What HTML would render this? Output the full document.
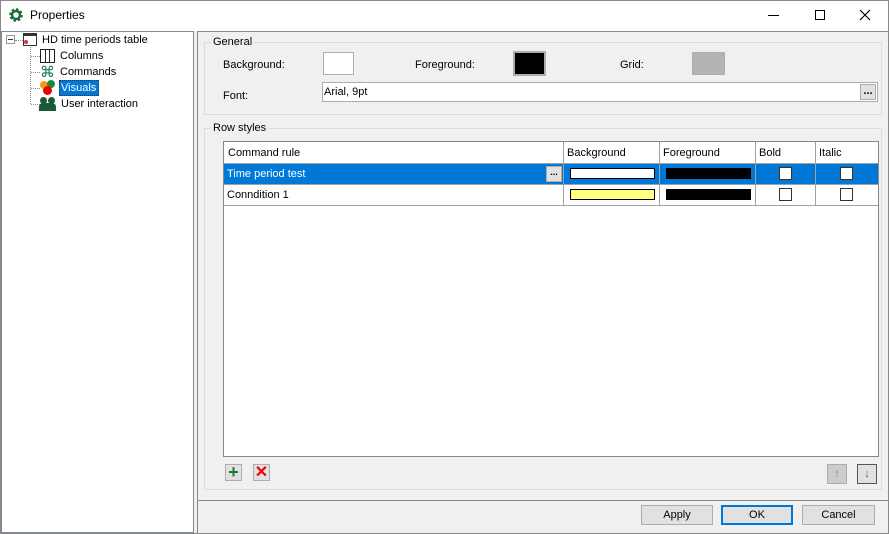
<!DOCTYPE html><html><head><style>
*{box-sizing:border-box}body{margin:0;width:889px;height:534px;position:relative;overflow:hidden;font-family:"Liberation Sans",Arial,sans-serif;font-size:11px;color:#000;background:#f0f0f0}
.a{position:absolute}
.t{position:absolute;white-space:nowrap}
.cb{position:absolute;width:13px;height:13px;border:1px solid #333;background:#fff}
.btn{position:absolute;height:20px;border:1px solid #adadad;background:#e1e1e1;text-align:center;line-height:18px}
</style></head><body>
<div class="a" style="left:0;top:0;width:889px;height:534px;border:1px solid #888"></div>
<div class="a" style="left:1px;top:1px;width:887px;height:30px;background:#fff"></div>
<svg class="a" style="left:9px;top:8px" width="14" height="14" viewBox="0 0 14 14"><circle cx="7" cy="7" r="5" fill="none" stroke="#1a6e3a" stroke-width="3.5" stroke-dasharray="2.2 1.7"/><circle cx="7" cy="7" r="4" fill="none" stroke="#1a6e3a" stroke-width="2.5"/></svg>
<div class="t" style="left:30px;top:8px;font-size:12px">Properties</div>
<div class="a" style="left:768px;top:15px;width:11px;height:1px;background:#000"></div>
<div class="a" style="left:815px;top:10px;width:10px;height:10px;border:1px solid #000"></div>
<svg class="a" style="left:859px;top:9px" width="12" height="12"><path d="M1 1L11 11M11 1L1 11" stroke="#000" stroke-width="1.2"/></svg>
<!-- tree -->
<div class="a" style="left:1px;top:31px;width:193px;height:502px;background:#fff;border:1px solid #828790"></div>
<div class="a" style="left:6px;top:35px;width:9px;height:9px;border:1px solid #999;background:#fff"></div>
<div class="a" style="left:8px;top:39px;width:5px;height:1px;background:#333"></div>
<div class="a" style="left:15px;top:40px;width:8px;border-top:1px dotted #888"></div>
<div class="a" style="left:30px;top:47px;height:57px;border-left:1px dotted #888"></div>
<div class="a" style="left:31px;top:56px;width:9px;border-top:1px dotted #888"></div>
<div class="a" style="left:31px;top:72px;width:9px;border-top:1px dotted #888"></div>
<div class="a" style="left:31px;top:88px;width:9px;border-top:1px dotted #888"></div>
<div class="a" style="left:31px;top:104px;width:9px;border-top:1px dotted #888"></div>
<div class="a" style="left:23px;top:33px;width:14px;height:13px;border:1px solid #333;background:#fff;border-top-width:3px"></div>
<div class="a" style="left:24px;top:40px;width:4px;height:4px;border-radius:50%;background:#d33"></div>
<div class="t" style="left:42px;top:34px">HD time periods table</div>
<div class="a" style="left:40px;top:49px;width:15px;height:14px;border:1px solid #222"></div>
<div class="a" style="left:45px;top:49px;width:5px;height:14px;border-left:1px solid #222;border-right:1px solid #222"></div>
<div class="t" style="left:60px;top:50px">Columns</div>
<div class="t" style="left:40px;top:63px;font-size:15px;color:#1a7a4a">&#8984;</div>
<div class="t" style="left:60px;top:66px">Commands</div>
<div class="a" style="left:40px;top:81px;width:8px;height:8px;border-radius:50%;background:#f39c12"></div>
<div class="a" style="left:47px;top:80px;width:8px;height:8px;border-radius:50%;background:#1a8a3a"></div>
<div class="a" style="left:43px;top:86px;width:9px;height:9px;border-radius:50%;background:#e00"></div>
<div class="a" style="left:59px;top:80px;width:40px;height:16px;background:#0078d7;border:1px dotted #333"></div>
<div class="t" style="left:61px;top:82px;color:#fff">Visuals</div>
<div class="a" style="left:40px;top:97px;width:7px;height:7px;border-radius:50%;background:#1a5a3a"></div>
<div class="a" style="left:48px;top:97px;width:7px;height:7px;border-radius:50%;background:#1a5a3a"></div>
<div class="a" style="left:39px;top:103px;width:17px;height:8px;border-radius:4px 4px 0 0;background:#1a5a3a"></div>
<div class="t" style="left:61px;top:98px">User interaction</div>
<!-- right -->
<div class="a" style="left:197px;top:31px;width:691px;height:502px;border:1px solid #828790;border-right:none;border-bottom:none"></div>
<div class="a" style="left:204px;top:42px;width:678px;height:73px;border:1px solid #dcdcdc"></div>
<div class="t" style="left:211px;top:36px;background:#f0f0f0;padding:0 2px">General</div>
<div class="t" style="left:223px;top:59px">Background:</div>
<div class="a" style="left:323px;top:52px;width:31px;height:23px;border:1px solid #adadad;background:#fff"></div>
<div class="t" style="left:415px;top:59px">Foreground:</div>
<div class="a" style="left:514px;top:52px;width:31px;height:23px;border:1px solid #adadad;background:#000;outline:1px solid #adadad"></div>
<div class="t" style="left:620px;top:59px">Grid:</div>
<div class="a" style="left:692px;top:52px;width:33px;height:23px;border:1px solid #adadad;background:#b4b4b4"></div>
<div class="t" style="left:223px;top:90px">Font:</div>
<div class="a" style="left:322px;top:82px;width:556px;height:20px;border:1px solid #adadad;background:#fff"></div>
<div class="t" style="left:324px;top:86px">Arial, 9pt</div>
<div class="a" style="left:860px;top:84px;width:16px;height:16px;border:1px solid #adadad;background:#e1e1e1;font-weight:bold;text-align:center;line-height:12px">...</div>
<div class="a" style="left:204px;top:128px;width:678px;height:362px;border:1px solid #dcdcdc"></div>
<div class="t" style="left:211px;top:122px;background:#f0f0f0;padding:0 2px">Row styles</div>
<div class="a" style="left:223px;top:141px;width:656px;height:316px;border:1px solid #828790;background:#fff"></div>
<div class="a" style="left:224px;top:163px;width:654px;height:1px;background:#a0a0a0"></div>
<div class="a" style="left:224px;top:164px;width:654px;height:20px;background:#0078d7"></div>
<div class="a" style="left:224px;top:184px;width:654px;height:1px;background:#a0a0a0"></div>
<div class="a" style="left:224px;top:205px;width:654px;height:1px;background:#a0a0a0"></div>
<div class="a" style="left:563px;top:142px;width:1px;height:63px;background:#a0a0a0"></div>
<div class="a" style="left:659px;top:142px;width:1px;height:63px;background:#a0a0a0"></div>
<div class="a" style="left:755px;top:142px;width:1px;height:63px;background:#a0a0a0"></div>
<div class="a" style="left:815px;top:142px;width:1px;height:63px;background:#a0a0a0"></div>
<div class="t" style="left:228px;top:147px">Command rule</div>
<div class="t" style="left:567px;top:147px">Background</div>
<div class="t" style="left:663px;top:147px">Foreground</div>
<div class="t" style="left:759px;top:147px">Bold</div>
<div class="t" style="left:819px;top:147px">Italic</div>
<div class="t" style="left:227px;top:168px;color:#fff">Time period test</div>
<div class="a" style="left:546px;top:166px;width:16px;height:16px;border:1px solid #adadad;background:#e1e1e1;font-size:9px;font-weight:bold;text-align:center;line-height:10px">...</div>
<div class="a" style="left:570px;top:168px;width:85px;height:11px;border:1px solid #000;background:#fff"></div>
<div class="a" style="left:666px;top:168px;width:85px;height:11px;background:#000"></div>
<div class="cb" style="left:779px;top:167px"></div><div class="cb" style="left:840px;top:167px"></div>
<div class="t" style="left:227px;top:189px">Conndition 1</div>
<div class="a" style="left:570px;top:189px;width:85px;height:11px;border:1px solid #000;background:#ffff80"></div>
<div class="a" style="left:666px;top:189px;width:85px;height:11px;background:#000"></div>
<div class="cb" style="left:779px;top:188px"></div><div class="cb" style="left:840px;top:188px"></div>
<div class="a" style="left:225px;top:464px;width:17px;height:17px;border:1px solid #adadad;background:#e1e1e1;color:#1a7a3a;font-size:18px;font-weight:bold;text-align:center;line-height:14px">+</div>
<div class="a" style="left:253px;top:464px;width:17px;height:17px;border:1px solid #adadad;background:#e1e1e1;color:#e00;font-size:16px;font-weight:bold;text-align:center;line-height:15px">&#10005;</div>
<div class="a" style="left:827px;top:464px;width:20px;height:20px;border:1px solid #adadad;background:#ccc;color:#888;text-align:center;line-height:18px">&#8593;</div>
<div class="a" style="left:857px;top:464px;width:20px;height:20px;border:1px solid #555;background:#e1e1e1;color:#1a7a3a;text-align:center;line-height:18px">&#8595;</div>
<div class="a" style="left:198px;top:500px;width:690px;height:1px;background:#828790"></div>
<div class="btn" style="left:641px;top:505px;width:72px">Apply</div>
<div class="btn" style="left:721px;top:505px;width:72px;border:2px solid #0078d7;line-height:16px">OK</div>
<div class="btn" style="left:802px;top:505px;width:73px">Cancel</div>
</body></html>
